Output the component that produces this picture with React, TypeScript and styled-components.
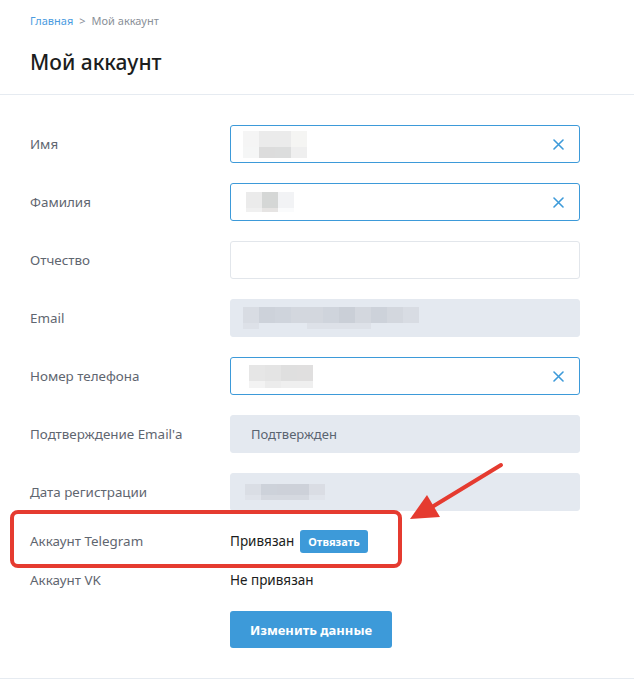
import * as React from "react";
import styled, { createGlobalStyle } from "styled-components";

const GlobalStyle = createGlobalStyle`
    html, body {
        margin: 0;
        padding: 0;
        background: #ffffff;
    }
    body {
        font-family: "Noto Sans", "Open Sans", Arial, sans-serif;
        color: #1f2329;
    }
`;

const Page = styled.div`
    position: relative;
    width: 634px;
    min-height: 681px;
    box-sizing: border-box;
`;

const Header = styled.div`
    padding: 12px 30px 0;
    border-bottom: 1px solid #e6ebf1;
    height: 95px;
    box-sizing: border-box;
`;

const Breadcrumbs = styled.div`
    display: flex;
    align-items: center;
    gap: 6px;
    font-size: 11px;
    line-height: 18px;
    color: #8a9098;
`;

const Crumb = styled.a`
    color: #4a9be0;
    text-decoration: none;
`;

const Title = styled.h1`
    margin: 20px 0 0;
    font-size: 21px;
    font-weight: 500;
    line-height: 24px;
    color: #1b1d20;
`;

const Form = styled.div`
    display: flex;
    flex-direction: column;
    padding: 30px 30px 30px;
    border-bottom: 1px solid #e6ebf1;
`;

const Row = styled.div<{ $mt?: number; $h?: number }>`
    display: grid;
    grid-template-columns: 200px 350px;
    align-items: center;
    margin-top: ${(p) => p.$mt ?? 0}px;
    height: ${(p) => p.$h ?? 38}px;
`;

const Label = styled.div`
    font-size: 13.4px;
    color: #5f6670;
`;

const Field = styled.div<{ $variant: "active" | "empty" | "disabled" }>`
    display: flex;
    align-items: center;
    justify-content: space-between;
    height: 38px;
    box-sizing: border-box;
    padding: 0 14px 0 12px;
    border-radius: 3px;
    border: 1px solid
        ${(p) =>
            p.$variant === "active"
                ? "#3d9ad9"
                : p.$variant === "empty"
                ? "#e2e6eb"
                : "#e4e9f0"};
    background: ${(p) => (p.$variant === "disabled" ? "#e4e9f0" : "#ffffff")};
`;

const FieldText = styled.span`
    font-size: 13px;
    color: #5a6470;
    padding-left: 8px;
`;

const Mosaic = styled.div<{ $cols: number; $offset: number }>`
    display: grid;
    grid-template-columns: repeat(${(p) => p.$cols}, 16px);
    margin-left: ${(p) => p.$offset}px;
`;

const Cell = styled.span<{ $c: string; $h: number }>`
    display: block;
    height: ${(p) => p.$h}px;
    background: ${(p) => p.$c};
`;

const ClearButton = styled.button`
    display: flex;
    align-items: center;
    justify-content: center;
    width: 14px;
    height: 14px;
    padding: 0;
    border: none;
    background: none;
    color: #3d9ad9;
    cursor: pointer;
`;

const Status = styled.div`
    display: flex;
    align-items: center;
    gap: 6px;
    font-size: 13.5px;
    color: #1b1d20;
`;

const SmallButton = styled.button`
    height: 23px;
    padding: 0 8px;
    border: none;
    border-radius: 3px;
    background: #3d9ad9;
    color: #ffffff;
    font-family: inherit;
    font-size: 11px;
    font-weight: 700;
    cursor: pointer;
`;

const SubmitRow = styled.div`
    margin-top: 19px;
    padding-left: 200px;
`;

const SubmitButton = styled.button`
    width: 162px;
    height: 37px;
    border: none;
    border-radius: 3px;
    background: #3d9ad9;
    color: #ffffff;
    font-family: inherit;
    font-size: 13px;
    font-weight: 700;
    cursor: pointer;
`;

const Annotation = styled.svg`
    position: absolute;
    left: 0;
    top: 0;
    pointer-events: none;
`;

type Blur = { offset: number; top: string[]; bottom: string[]; th: number; bh: number };

const blurs: Record<string, Blur> = {
    name: {
        offset: 0,
        top: ["#f5f5f5", "#ebebeb", "#ebebeb", "#f5f5f3"],
        bottom: ["#f5f6f6", "#dcdcdc", "#dcdddd", "#efefef"],
        th: 16,
        bh: 11
    },
    surname: {
        offset: 3,
        top: ["#ebebeb", "#d5d7d6", "#f2f3f5"],
        bottom: ["#f0f0f0", "#e6e4e3", "#fafbfc"],
        th: 16,
        bh: 4
    },
    email: {
        offset: 0,
        top: [
            "#d8dce3", "#cdd2da", "#cfd4dc", "#d3d7de", "#d3d7de", "#cfd4dc",
            "#cacfd7", "#d3d7de", "#cdd2da", "#d3d7de", "#d8dce3"
        ],
        bottom: [
            "#dde1e8", "#e4e9f0", "#e4e9f0", "#e4e9f0", "#dde1e8", "#dde1e8",
            "#dde1e8", "#dde1e8", "#e4e9f0", "#e4e9f0", "#e4e9f0"
        ],
        th: 16,
        bh: 6
    },
    phone: {
        offset: 6,
        top: ["#e6e6e6", "#e4e4e4", "#dfdfdf", "#e0dfdf"],
        bottom: ["#f3f3f3", "#ececec", "#efefef", "#efefef"],
        th: 16,
        bh: 7
    },
    date: {
        offset: 2,
        top: ["#dadee5", "#cdd2da", "#cdd1d9", "#cdd1d9", "#dadde4"],
        bottom: ["#dfe3ea", "#d5d9e0", "#d5d9e0", "#d5d9e0", "#e0e4eb"],
        th: 11,
        bh: 5
    }
};

const Blurred = ({ b }: { b: Blur }) => (
    <Mosaic $cols={b.top.length} $offset={b.offset}>
        {b.top.map((c, i) => (
            <Cell key={"t" + i} $c={c} $h={b.th} />
        ))}
        {b.bottom.map((c, i) => (
            <Cell key={"b" + i} $c={c} $h={b.bh} />
        ))}
    </Mosaic>
);

const Clear = () => (
    <ClearButton aria-label="Очистить">
        <svg width="11" height="11" viewBox="0 0 11 11">
            <path
                d="M1 1 L10 10 M10 1 L1 10"
                stroke="currentColor"
                strokeWidth="1.6"
                strokeLinecap="round"
            />
        </svg>
    </ClearButton>
);

export default function App() {
    return (
        <Page>
            <GlobalStyle />
            <Header>
                <Breadcrumbs>
                    <Crumb href="#">Главная</Crumb>
                    <span>&gt;</span>
                    <span>Мой аккаунт</span>
                </Breadcrumbs>
                <Title>Мой аккаунт</Title>
            </Header>
            <Form>
                <Row>
                    <Label>Имя</Label>
                    <Field $variant="active">
                        <Blurred b={blurs.name} />
                        <Clear />
                    </Field>
                </Row>
                <Row $mt={20}>
                    <Label>Фамилия</Label>
                    <Field $variant="active">
                        <Blurred b={blurs.surname} />
                        <Clear />
                    </Field>
                </Row>
                <Row $mt={20}>
                    <Label>Отчество</Label>
                    <Field $variant="empty" />
                </Row>
                <Row $mt={20}>
                    <Label>Email</Label>
                    <Field $variant="disabled">
                        <Blurred b={blurs.email} />
                    </Field>
                </Row>
                <Row $mt={20}>
                    <Label>Номер телефона</Label>
                    <Field $variant="active">
                        <Blurred b={blurs.phone} />
                        <Clear />
                    </Field>
                </Row>
                <Row $mt={20}>
                    <Label>Подтверждение Email'а</Label>
                    <Field $variant="disabled">
                        <FieldText>Подтвержден</FieldText>
                    </Field>
                </Row>
                <Row $mt={20}>
                    <Label>Дата регистрации</Label>
                    <Field $variant="disabled">
                        <Blurred b={blurs.date} />
                    </Field>
                </Row>
                <Row $mt={18} $h={24}>
                    <Label>Аккаунт Telegram</Label>
                    <Status>
                        Привязан
                        <SmallButton>Отвязать</SmallButton>
                    </Status>
                </Row>
                <Row $mt={15} $h={24}>
                    <Label>Аккаунт VK</Label>
                    <Status>Не привязан</Status>
                </Row>
                <SubmitRow>
                    <SubmitButton>Изменить данные</SubmitButton>
                </SubmitRow>
            </Form>
            <Annotation width="634" height="681" viewBox="0 0 634 681">
                <rect
                    x="12"
                    y="512"
                    width="388"
                    height="54"
                    rx="6"
                    fill="none"
                    stroke="#e53b30"
                    strokeWidth="4"
                />
                <path
                    d="M501 465 L432 507"
                    stroke="#e53b30"
                    strokeWidth="4"
                    strokeLinecap="round"
                />
                <path d="M410 519 L427 495 L440 517 Z" fill="#e53b30" />
            </Annotation>
        </Page>
    );
}
